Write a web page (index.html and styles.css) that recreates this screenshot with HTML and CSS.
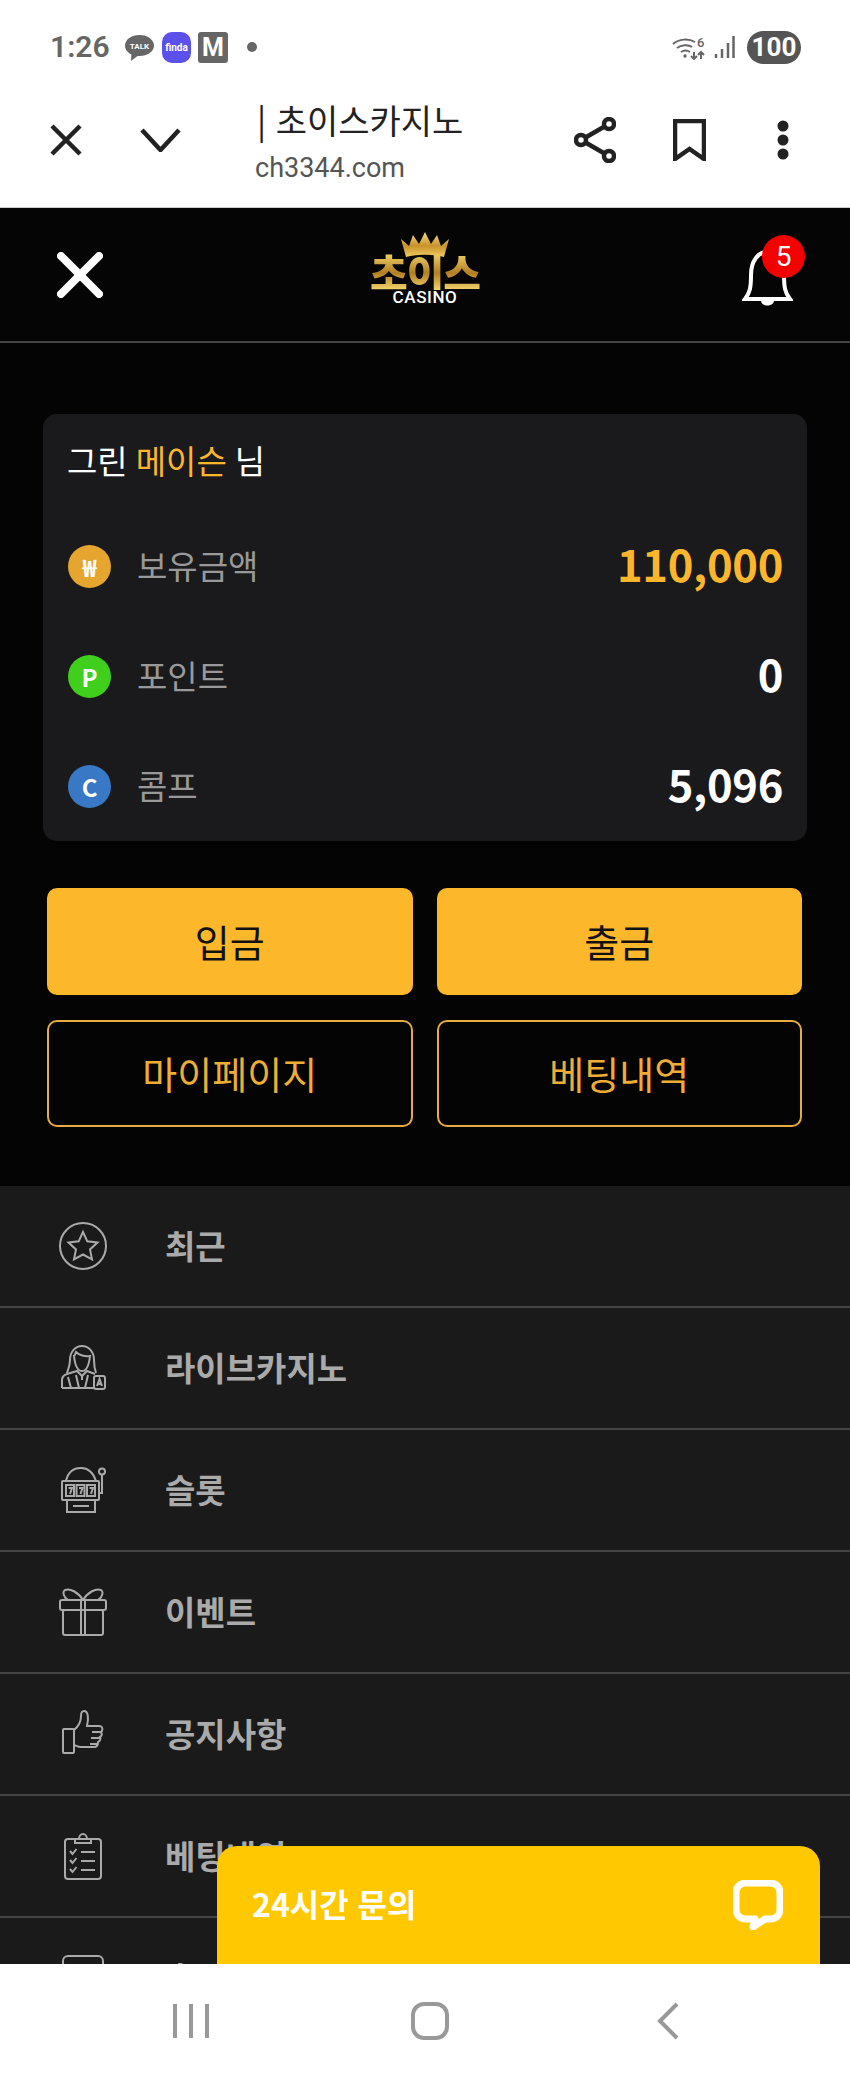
FILE: index.html
```html
<!DOCTYPE html>
<html lang="ko">
<head>
<meta charset="utf-8">
<title>초이스카지노</title>
<link rel="stylesheet" href="styles.css">
</head>
<body>
<div class="phone">
  <div class="status">
    <span class="time">1:26</span>
    <svg class="talk" viewBox="0 0 29 27"><path d="M14.5 0C6.5 0 0 4.6 0 10.6c0 3.8 2.5 7 6.4 8.9L6 26l6.6-5c.6.1 1.300.1 1.900.1 8 0 14.500-4.600 14.500-10.500S22.500 0 14.500 0z"/><text x="14.500" y="14" text-anchor="middle">TALK</text></svg>
    <span class="finda">finda</span>
    <span class="mbox">M</span>
    <span class="sdot"></span>
    <span class="status-right">
      <svg class="wifi" viewBox="0 0 35 25"><path d="M1 9c6-5 15-6 22-2M5 13c4-3 11-4 15-1M9 17c3-2 6-2 9 0"/><circle cx="13" cy="21" r="1.700" class="solid"/><path d="M22 17v7M19 21l3 3 3-3M29 24v-7M26 20l3-3 3 3"/><text x="25" y="12">6</text></svg>
      <svg class="signal" viewBox="0 0 21 24"><path d="M2 19v4M8 14v9M14 8v15M19.500 1v22"/></svg>
      <span class="battery">100</span>
    </span>
  </div>

  <div class="browser">
    <svg class="b-x" viewBox="0 0 32 32"><path d="M2 2l28 28M30 2L2 30"/></svg>
    <svg class="b-chev" viewBox="0 0 41 24"><path d="M2 2l18.500 20L39 2"/></svg>
    <div class="b-title">
      <div class="b-name">| 초이스카지노</div>
      <div class="b-url">ch3344.com</div>
    </div>
    <svg class="b-share" viewBox="0 0 42 46"><circle cx="35" cy="7" r="5"/><circle cx="7" cy="23" r="5"/><circle cx="35" cy="39" r="5"/><path d="M11.500 20.500l19-11M11.500 25.500l19 11"/></svg>
    <svg class="b-mark" viewBox="0 0 33 42"><path d="M2 2h29v38L16.500 30 2 40z"/></svg>
    <svg class="b-dots" viewBox="0 0 12 40"><circle cx="6" cy="6" r="5.500"/><circle cx="6" cy="20" r="5.500"/><circle cx="6" cy="34" r="5.500"/></svg>
  </div>

  <header class="site-head">
    <svg class="close" viewBox="0 0 46 46"><path d="M4 4l38 38M42 4L4 42"/></svg>
    <div class="logo">
      <svg class="crown" viewBox="0 0 50 26">
        <defs><linearGradient id="gold" x1="0" y1="0" x2="0" y2="1"><stop offset="0" stop-color="#f7dd7a"/><stop offset=".55" stop-color="#c8922c"/><stop offset="1" stop-color="#f0cd62"/></linearGradient></defs>
        <path fill="url(#gold)" d="M6 25L1 7l8 7 4-11 6 9 6-12 6 12 6-9 4 11 8-7-5 18c-12-3-26-3-38 0z"/>
      </svg>
      <div class="logo-ko">초이스</div>
      <div class="logo-en">CASINO</div>
    </div>
    <div class="bell-wrap">
      <svg class="bell" viewBox="0 0 51 58"><path d="M3 50c5-6 6-12 6-24C9 12 16 3 25.500 3S42 12 42 26c0 12 1 18 6 24z"/><path class="solid" d="M19 52h13c-1 6-12 6-13 0z"/></svg>
      <span class="badge">5</span>
    </div>
  </header>

  <section class="wallet">
    <div class="card">
      <div class="greet">그린 <span class="gold">메이슨</span> 님</div>
      <div class="row">
        <span class="coin coin-won">₩</span>
        <span class="label">보유금액</span>
        <span class="value gold">110,000</span>
      </div>
      <div class="row">
        <span class="coin coin-p">P</span>
        <span class="label">포인트</span>
        <span class="value">0</span>
      </div>
      <div class="row">
        <span class="coin coin-c">C</span>
        <span class="label">콤프</span>
        <span class="value">5,096</span>
      </div>
    </div>
    <div class="actions">
      <a class="btn btn-fill">입금</a>
      <a class="btn btn-fill">출금</a>
      <a class="btn btn-line">마이페이지</a>
      <a class="btn btn-line">베팅내역</a>
    </div>
  </section>

  <div class="scroll">
    <nav class="menu">
      <a class="item">
        <svg class="ico" viewBox="0 0 48 48"><circle cx="24" cy="24" r="23"/><path d="M24 10l4.300 9.300 10.200 1.200-7.500 6.900 2 10L24 32.500l-9 4.900 2-10-7.500-6.900 10.200-1.200z"/></svg>
        <span>최근</span>
      </a>
      <a class="item">
        <svg class="ico" viewBox="0 0 48 48"><path d="M11 16c0-9 6-14 12-14s12 5 12 14M15 12c1 9 4 15 8 15s7-6 8-15c-5 1-11-1-14-4-1 2-1 4-2 4zM11 16c0 6-2 10-3 13M35 16c0 6 1 10 2 13"/><path d="M3 44V36c0-3 2-5 5-6l10-3 5 5 5-5 8 3M3 44h32M9 33l3 11M17 31l3 13M29 31l-3 13M23 32v4"/><rect x="35" y="32" width="11" height="13" rx="2"/><path d="M38 42l2.500-7 2.500 7M39 40h3"/></svg>
        <span>라이브카지노</span>
      </a>
      <a class="item">
        <svg class="ico" viewBox="0 0 48 48"><path d="M7 15C9 6 15 2 22 2s12 4 15 13"/><rect x="3" y="15" width="37" height="19" rx="1"/><rect x="7" y="19" width="8" height="11"/><rect x="17.500" y="19" width="8" height="11"/><rect x="28" y="19" width="8" height="11"/><path d="M9.500 22h3.500l-2 6M20 22h3.500l-2 6M30.500 22h3.500l-2 6M8 34v12h28V34M14 40h16M40 27h3V9"/><circle cx="43" cy="5.500" r="3"/></svg>
        <span>슬롯</span>
      </a>
      <a class="item">
        <svg class="ico" viewBox="0 0 48 48"><rect x="1" y="12" width="46" height="10" rx="2"/><rect x="4" y="22" width="40" height="25" rx="2"/><path d="M22 12v35M26 12v35M24 12C19 4 11 0 6 2c-3 2-1 8 3 10M24 12c5-8 13-12 18-10 3 2 1 8-3 10"/></svg>
        <span>이벤트</span>
      </a>
      <a class="item">
        <svg class="ico" viewBox="0 0 48 48"><rect x="4" y="19" width="11" height="24" rx="1"/><path d="M15 20c5-4 7-9 7-14 0-3 1-5 3-5 4 0 5 7 3 15h12c3 0 4 2 3 5l-1 1c1 2 1 4-1 5 1 2 0 4-2 5 0 3-1 5-4 5H22c-3 0-4-1-7-2M33 22h9M32 28h9M31 34h8"/></svg>
        <span>공지사항</span>
      </a>
      <a class="item">
        <svg class="ico" viewBox="0 0 48 48"><rect x="6" y="7" width="36" height="40" rx="3"/><path d="M16 11V7h4c0-3 2-5 4-5s4 2 4 5h4v4z"/><path d="M11 19l2.500 3 4-5M11 28l2.500 3 4-5M11 37l2.500 3 4-5M22 20h14M22 29h14M22 38h14"/></svg>
        <span>베팅내역</span>
      </a>
      <a class="item">
        <svg class="ico" viewBox="0 0 48 48"><rect x="4" y="2" width="40" height="40" rx="5"/></svg>
        <span>출석체크</span>
      </a>
    </nav>
    <div class="chat">
      <span class="chat-text">24시간 문의</span>
      <svg class="chat-ico" viewBox="0 0 50 50"><path d="M13 3h24c6 0 10 4 10 10v16c0 6-4 10-10 10h-5l-12 8 2-8h-9C7 39 3 35 3 29V13C3 7 7 3 13 3z"/></svg>
    </div>
  </div>

  <div class="sysnav">
    <svg class="n-lines" viewBox="0 0 36 36"><path d="M2 1v34M18 1v34M34 1v34"/></svg>
    <svg class="n-home" viewBox="0 0 38 38"><rect x="2" y="2" width="34" height="34" rx="11"/></svg>
    <svg class="n-back" viewBox="0 0 22 38"><path d="M20 2L3 19l17 17"/></svg>
  </div>
</div>
</body>
</html>
```
FILE: styles.css
```css
* { box-sizing: border-box; }
html, body { margin: 0; padding: 0; background: #fff; }
body { font-family: "Noto Sans CJK KR", "Noto Sans", sans-serif; }
svg { display: block; flex: none; }
a { display: flex; }

.phone {
  width: 850px;
  height: 2078px;
  display: flex;
  flex-direction: column;
  overflow: hidden;
}

/* status bar */
.status {
  height: 84px;
  flex: none;
  display: flex;
  align-items: center;
  padding: 10px 49px 0 50px;
  color: #666;
}
.time { font: 600 30px/1 Roboto, sans-serif; width: 60px; margin-right: 15px; }
.talk { width: 29px; height: 27px; margin-right: 8px; margin-top: 2px; fill: #666; }
.talk text { font: 700 8px Roboto, sans-serif; fill: #fff; }
.finda {
  width: 29px; height: 31px; margin-right: 7px;
  background: #5b50ea; color: #fff; border-radius: 10px;
  font: 700 10px/31px Roboto, sans-serif; text-align: center;
}
.mbox {
  width: 30px; height: 31px; margin-right: 19px;
  background: #666; color: #fff; border-radius: 3px;
  font: 700 25px/31px Roboto, sans-serif; text-align: center;
}
.sdot { width: 10px; height: 10px; border-radius: 50%; background: #666; }
.status-right { margin-left: auto; display: flex; align-items: center; }
.wifi { width: 35px; height: 25px; margin-right: 7px; fill: none; stroke: #666; stroke-width: 2; }
.wifi .solid { fill: #666; stroke: none; }
.wifi text { font: 500 13px Roboto, sans-serif; fill: #666; stroke: none; }
.signal { width: 21px; height: 24px; margin-right: 12px; fill: none; stroke: #666; stroke-width: 2.500; }
.battery {
  width: 54px; height: 33px; background: #555; color: #fff; border-radius: 17px;
  font: 700 26px/33px Roboto, sans-serif; text-align: center;
}

/* browser bar */
.browser {
  height: 124px;
  flex: none;
  display: flex;
  align-items: center;
  padding: 0 61px 12px 50px;
  background: #fff;
  border-bottom: 1px solid #ccc;
}
.browser svg { fill: none; stroke: #222; stroke-width: 4.500; }
.b-x { width: 32px; height: 32px; margin-right: 58px; }
.b-chev { width: 41px; height: 24px; margin-right: 74px; }
.b-title { flex: 1; margin-top: 8px; }
.b-name { font-size: 34px; line-height: 48px; color: #222; padding-left: 2px; }
.b-url { font: 400 27px/48px Roboto, sans-serif; color: #555; }
.b-share { width: 42px; height: 46px; margin-right: 57px; }
.b-mark { width: 33px; height: 42px; margin-right: 71px; }
.browser .b-dots { width: 12px; height: 40px; fill: #222; stroke: none; }

/* site header */
.site-head {
  height: 135px;
  flex: none;
  display: grid;
  grid-template-columns: 1fr auto 1fr;
  align-items: center;
  padding: 0 57px;
  background: #050505;
  border-bottom: 2px solid #444;
}
.close { width: 46px; height: 46px; fill: none; stroke: #fff; stroke-width: 8; stroke-linecap: round; }
.logo { display: flex; flex-direction: column; align-items: center; margin-bottom: 14px; }
.crown { width: 50px; height: 26px; margin-bottom: -6px; position: relative; z-index: 1; }
.logo-ko {
  font-size: 41px; font-weight: 900; line-height: 38px; letter-spacing: -1px;
  background: linear-gradient(#f5d76e, #b17f22 55%, #f3d36c);
  -webkit-background-clip: text; background-clip: text; color: transparent;
}
.logo-en { font: 500 17px/14px Roboto, sans-serif; color: #fff; letter-spacing: .6px; }
.bell-wrap { justify-self: end; position: relative; width: 51px; height: 58px; margin-top: 6px; }
.bell { width: 51px; height: 58px; fill: none; stroke: #fff; stroke-width: 4; }
.bell .solid { fill: #fff; stroke: none; }
.badge {
  position: absolute; left: 20px; top: -14px;
  width: 43px; height: 43px; border-radius: 50%;
  background: #f50000; color: #fff;
  font: 400 28px/43px Roboto, sans-serif; text-align: center;
}

/* wallet */
.wallet {
  flex: none;
  height: 843px;
  padding: 71px 43px 0;
  background: #040404;
}
.card { background: #1a1a1c; border-radius: 14px; height: 427px; }
.greet { height: 97px; padding: 0 0 6px 24px; display: flex; align-items: center; gap: 8px; font-size: 33px; color: #fff; }
.gold { color: #fbb62c; }
.row { height: 110px; display: flex; align-items: center; padding: 0 24px 0 25px; }
.coin {
  width: 43px; height: 43px; border-radius: 50%; margin-right: 26px; flex: none;
  color: #fff; font-size: 24px; font-weight: 700; line-height: 43px; text-align: center;
}
.coin-won { background: #e6a52f; }
.coin-p { background: #3fcf1c; }
.coin-c { background: #3878c4; }
.label { font-size: 33px; color: #999; margin-top: -2px; }
.value { margin-left: auto; margin-top: -5px; font-size: 43.500px; font-weight: 700; color: #fff; letter-spacing: -.3px; }
.value.gold { color: #fbb62c; }

.actions {
  display: grid;
  grid-template-columns: 1fr 1fr;
  grid-auto-rows: 107px;
  gap: 25px 24px;
  margin: 47px 5px 0 4px;
}
.btn { align-items: center; justify-content: center; border-radius: 10px; font-size: 38px; padding-bottom: 2px; }
.btn-fill { background: #fcb72b; color: #111; }
.btn-line { border: 2px solid #e8ab3f; color: #eeae36; }

/* menu */
.scroll { flex: 1; min-height: 0; position: relative; background: #1a1a1a; overflow: hidden; }
.item {
  height: 122px;
  align-items: center;
  padding-left: 59px;
  border-bottom: 2px solid #444;
  font-size: 33px;
  font-weight: 700;
  color: #aaa;
  gap: 58px;
}
.item span { margin-top: -2px; }
.ico { width: 48px; height: 48px; fill: none; stroke: #aaa; stroke-width: 2; }
.chat {
  position: absolute;
  left: 217px; bottom: 0;
  width: 603px; height: 118px;
  padding: 0 37px 0 35px;
  display: flex;
  align-items: center;
  justify-content: space-between;
  background: #ffc800;
  border-radius: 20px 20px 0 0;
}
.chat-text { font-size: 32px; font-weight: 700; color: #fff; margin-top: -4px; }
.chat-ico { width: 50px; height: 50px; fill: none; stroke: #fff; stroke-width: 7; stroke-linejoin: round; }

/* system nav */
.sysnav {
  height: 114px;
  flex: none;
  display: flex;
  align-items: center;
  background: #fff;
  padding: 0 0 0 173px;
}
.sysnav svg { fill: none; stroke: #999; stroke-width: 4; }
.n-lines { width: 36px; height: 36px; margin-right: 202px; }
.n-home { width: 38px; height: 38px; margin-right: 208px; }
.n-back { width: 22px; height: 38px; }
```
